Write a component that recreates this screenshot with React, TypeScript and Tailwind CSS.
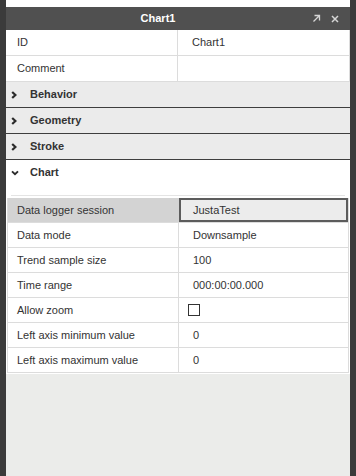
import React from "react";

const font = { fontFamily: '"Liberation Sans", Arial, sans-serif' };

function ChevronRight() {
  return (
    <svg width="6" height="8" viewBox="0 0 6 8" className="shrink-0">
      <path d="M1.2 1 L4.4 4 L1.2 7" fill="none" stroke="#2b2b2b" strokeWidth="2.2" />
    </svg>
  );
}

function ChevronDown() {
  return (
    <svg width="8" height="6" viewBox="0 0 8 6" className="shrink-0">
      <path d="M1 1.4 L4 4.2 L7 1.4" fill="none" stroke="#2b2b2b" strokeWidth="1.9" />
    </svg>
  );
}

function Section({ title, open }: { title: string; open?: boolean }) {
  return (
    <div
      className={`flex h-[26px] items-center border-b ${
        open ? "border-transparent bg-white" : "border-[#3e3e3e] bg-[#ebebeb]"
      }`}
    >
      <div className="flex w-[24px] justify-start pl-[5px]">{open ? <ChevronDown /> : <ChevronRight />}</div>
      <span className="text-[11px] font-bold text-[#333]">{title}</span>
    </div>
  );
}

function Row({ label, value }: { label: string; value?: React.ReactNode }) {
  return (
    <div className="flex h-[25px] border-b border-[#dcdcdc]">
      <div className="flex w-[171px] items-center border-r border-[#dcdcdc] pl-[9px] text-[11px] text-[#333]">
        {label}
      </div>
      <div className="flex flex-1 items-center pl-[14px] text-[11px] text-[#333]">{value}</div>
    </div>
  );
}

export default function App() {
  const rows: [string, React.ReactNode][] = [
    ["Data mode", "Downsample"],
    ["Trend sample size", "100"],
    ["Time range", "000:00:00.000"],
    ["Allow zoom", <span className="-ml-[5px] block h-[12px] w-[12px] border border-[#333] bg-white" />],
    ["Left axis minimum value", "0"],
    ["Left axis maximum value", "0"],
  ];

  return (
    <div className="flex h-[476px] w-[356px] bg-[#3b3b3b] px-[6px]" style={font}>
      <div className="flex flex-1 flex-col">
        <div className="h-[7px] bg-white" />

        {/* title bar */}
        <div className="flex h-[23px] items-center bg-[#505050]">
          <div className="flex-1 text-center text-[11px] font-bold text-white">Chart1</div>
          <div className="flex w-[40px] items-center gap-[10px] pl-[2px]">
            <svg width="9" height="9" viewBox="0 0 9 9">
              <path d="M1.5 7.5 L7.5 1.5 M2.5 1.5 H7.5 V6.5" fill="none" stroke="#d6d6d6" strokeWidth="1.3" />
            </svg>
            <svg width="8" height="8" viewBox="0 0 8 8">
              <path d="M1 1 L7 7 M7 1 L1 7" fill="none" stroke="#d6d6d6" strokeWidth="1.5" />
            </svg>
          </div>
        </div>

        {/* general */}
        <div className="border-r border-[#dcdcdc] bg-white">
          <div className="flex h-[26px] border-b border-[#dcdcdc]">
            <div className="flex w-[172px] items-center border-r border-[#dcdcdc] pl-[11px] text-[11px] text-[#333]">ID</div>
            <div className="flex flex-1 items-center pl-[14px] text-[11px] text-[#333]">Chart1</div>
          </div>
          <div className="flex h-[26px] border-b border-[#dcdcdc]">
            <div className="flex w-[172px] items-center border-r border-[#dcdcdc] pl-[11px] text-[11px] text-[#333]">Comment</div>
            <div className="flex-1" />
          </div>
        </div>

        <Section title="Behavior" />
        <Section title="Geometry" />
        <Section title="Stroke" />
        <Section title="Chart" open />

        {/* chart body */}
        <div className="bg-white pb-[1px] pt-[9px]">
          <div className="mx-[5px] h-px bg-[#e4e4e4]" />
          <div className="mx-[1px] mt-[2px] border-x border-[#dcdcdc]">
            <div className="flex h-[25px] border-b border-[#dcdcdc]">
              <div className="flex w-[171px] items-center bg-[#d3d3d3] pl-[9px] text-[11px] text-[#333]">
                Data logger session
              </div>
              <div className="flex flex-1 items-center border-2 border-[#5c5c5c] bg-[#ececec] pl-[12px] text-[11px] text-[#333]">
                JustaTest
              </div>
            </div>
            {rows.map(([l, v]) => (
              <Row key={l} label={l} value={v} />
            ))}
          </div>
        </div>

        <div className="flex-1 bg-[#ebecea]" />
      </div>
    </div>
  );
}
